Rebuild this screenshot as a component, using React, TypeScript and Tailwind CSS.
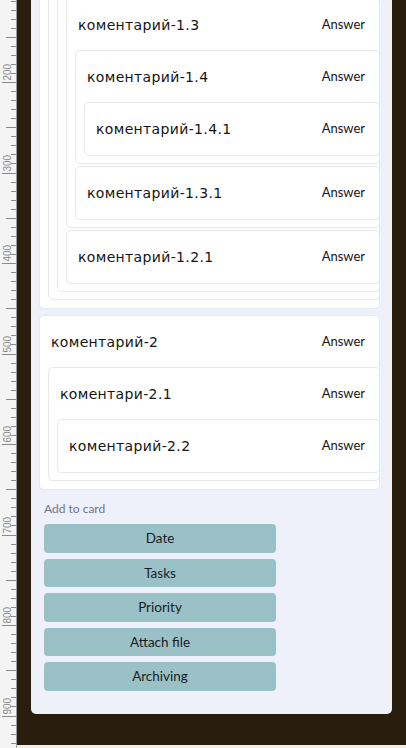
import React from "react";

type Comment = {
  id: string;
  text: string;
  replies?: Comment[];
};

const comments: Comment[] = [
  {
    id: "1",
    text: "коментарий-1",
    replies: [
      {
        id: "1.1",
        text: "коментарий-1.1",
        replies: [
          {
            id: "1.2",
            text: "коментарий-1.2",
            replies: [
              {
                id: "1.3",
                text: "коментарий-1.3",
                replies: [
                  {
                    id: "1.4",
                    text: "коментарий-1.4",
                    replies: [{ id: "1.4.1", text: "коментарий-1.4.1" }],
                  },
                  { id: "1.3.1", text: "коментарий-1.3.1" },
                ],
              },
              { id: "1.2.1", text: "коментарий-1.2.1" },
            ],
          },
        ],
      },
    ],
  },
  {
    id: "2",
    text: "коментарий-2",
    replies: [
      {
        id: "2.1",
        text: "коментари-2.1",
        replies: [{ id: "2.2", text: "коментарий-2.2" }],
      },
    ],
  },
];

const actions = ["Date", "Tasks", "Priority", "Attach file", "Archiving"];

function CommentCard({ comment, depth = 0 }: { comment: Comment; depth?: number }) {
  const hasReplies = comment.replies && comment.replies.length > 0;
  return (
    <div className="bg-white rounded-[4px] shadow-[0_0_0_1px_#e6e8ed,0_1px_1px_rgba(0,0,0,0.06)]">
      <div className="h-[52px] flex items-center justify-between pl-[11px] pr-[14px] text-[#141414]">
        <span className="text-[14px] tracking-[0.35px] font-['DejaVu_Sans',sans-serif]">{comment.text}</span>
        <button className="text-[13px] cursor-pointer">Answer</button>
      </div>
      {hasReplies && (
        <div className={`flex flex-col gap-[4px] pl-[9px] ${depth === 0 ? "pb-[9px]" : "pb-[8px]"}`}>
          {comment.replies!.map((r) => (
            <CommentCard key={r.id} comment={r} depth={depth + 1} />
          ))}
        </div>
      )}
    </div>
  );
}

function Ruler() {
  // ruler numbers run at ~0.905px per unit, 200 sits at y=82
  const ticks: number[] = [];
  for (let v = 110; v <= 940; v += 10) ticks.push(v);
  const y = (v: number) => 82 + (v - 200) * 0.905;

  return (
    <svg width="17" height="748" className="block shrink-0 bg-[#f4f4f4]">
      {ticks.map((v) => {
        const yy = Math.round(y(v)) + 0.5;
        const len = v % 100 === 0 ? 14 : v % 50 === 0 ? 10 : 5;
        return (
          <g key={v}>
            <line x1={16 - len} x2={16} y1={yy} y2={yy} stroke="#8a8a8a" strokeWidth="1" />
            {v % 100 === 0 && (
              <text
                transform={`translate(10.5 ${yy - 2}) rotate(-90)`}
                fontSize="10"
                fill="#8a8a8a"
                fontFamily="'Liberation Sans', Arial, sans-serif"
              >
                {v}
              </text>
            )}
          </g>
        );
      })}
      <line x1="16.5" x2="16.5" y1="0" y2="748" stroke="#9a9a9a" strokeWidth="1" />
    </svg>
  );
}

export default function App() {
  return (
    <div
      className="w-[406px] h-[748px] overflow-hidden flex flex-col bg-[#eeeeee]"
      style={{ fontFamily: "Lato, 'Open Sans', sans-serif" }}
    >
      <div className="flex h-[745px]">
        <Ruler />
        <div className="flex-1 bg-[#291d0d] overflow-hidden pl-[14px]">
          <div className="w-[361px] -mt-[166px] bg-[#eef1fa] rounded-b-[5px] pt-[9px] pb-[23px]">
            <div className="flex flex-col gap-[8px] pl-[9px] pr-[13px]">
              {comments.map((c) => (
                <CommentCard key={c.id} comment={c} />
              ))}
            </div>

            <div className="pl-[13px] mt-[12px]">
              <p className="text-[12px] leading-[16px] text-[#6f7487] mb-[7px]">Add to card</p>
              <div className="flex flex-col gap-[6px] w-[232px]">
                {actions.map((a) => (
                  <button
                    key={a}
                    className="h-[28.5px] rounded-[4px] bg-[#9ac1c5] text-[13.5px] text-[#1b1b25] cursor-pointer"
                  >
                    {a}
                  </button>
                ))}
              </div>
            </div>
          </div>
        </div>
      </div>
    </div>
  );
}
